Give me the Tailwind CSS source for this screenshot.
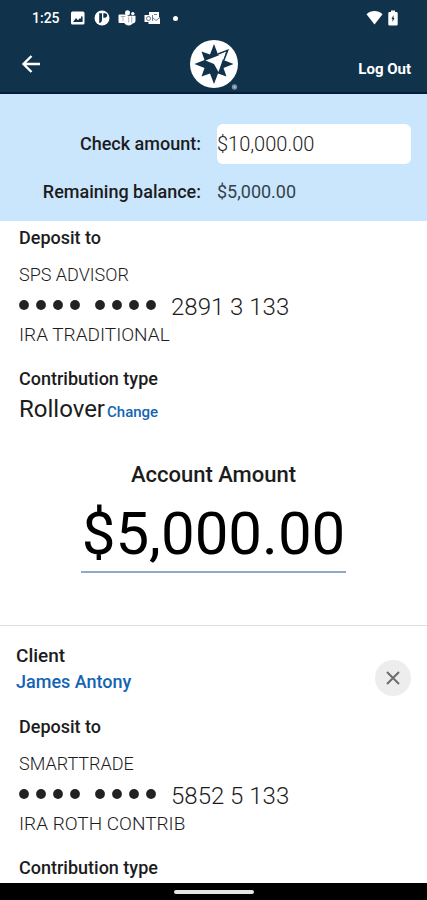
<!DOCTYPE html>
<html lang="en">
<head>
<meta charset="utf-8">
<meta name="viewport" content="width=device-width, initial-scale=1">
<title>Check deposit</title>
<script src="https://cdn.jsdelivr.net/npm/@tailwindcss/browser@4"></script>
</head>
<body class="flex min-h-screen flex-col bg-white font-['Roboto',sans-serif] text-[18px] leading-6 text-[#1c1c1c]">
<svg class="hidden" aria-hidden="true">
  <symbol id="mask" viewBox="0 0 138 10">
    <g fill="#222">
      <circle cx="5" cy="5" r="4.900"/><circle cx="22" cy="5" r="4.900"/><circle cx="39" cy="5" r="4.900"/><circle cx="56" cy="5" r="4.900"/>
      <circle cx="81" cy="5" r="4.900"/><circle cx="98" cy="5" r="4.900"/><circle cx="115" cy="5" r="4.900"/><circle cx="132" cy="5" r="4.900"/>
    </g>
  </symbol>
</svg>

<header class="border-b-2 border-[#051d3c] bg-[#10324b] text-white">
  <div class="flex h-9 items-center justify-between pr-7 pl-8">
    <div class="flex items-center gap-2">
      <span class="w-[30px] text-[14px] font-medium">1:25</span>
      <svg class="size-4" viewBox="0 0 16 16" aria-hidden="true">
        <rect x="1" y="1.500" width="13.500" height="13" rx="1.500" fill="#fff"/>
        <path d="M3 12l3-4 2 2.300 2-2.300 1 1V6.500h1.600V12z" fill="#10324b"/>
      </svg>
      <svg class="size-4" viewBox="0 0 16 16" aria-hidden="true">
        <circle cx="8" cy="8" r="7.500" fill="#fff"/>
        <path d="M5.200 13V3.300H8v6.500C8 11.800 7 13 5.200 13zM9.300 3.300h1.600c1.500 0 2.300 1 2.300 2.200s-.900 2.200-2.300 2.200H9.300z" fill="#10324b"/>
      </svg>
      <svg class="h-4 w-[18px]" viewBox="0 0 18 16" aria-hidden="true">
        <circle cx="9.500" cy="2.800" r="2.500" fill="#fff"/><circle cx="14.800" cy="3.600" r="1.700" fill="#fff"/>
        <path d="M6 5.800h11.500v4.700c0 2-1.300 3-3 3-.800 1.300-2 2-3.700 2-2.500 0-4.300-1.500-4.800-3.500z" fill="#fff"/>
        <rect x=".500" y="4.500" width="9" height="8.500" rx="1" fill="#fff"/>
        <path d="M2.700 6.500h4.600M5 6.500v4.700M10.700 6.500v6M13.700 6.500v6" fill="none" stroke="#a3b0bb" stroke-width="1"/>
      </svg>
      <svg class="h-4 w-[17px]" viewBox="0 0 17 16" aria-hidden="true">
        <path d="M5 2h10v5l1 1v6H4.500v-2H.500V5H5z" fill="#fff"/>
        <circle cx="4.500" cy="8.500" r="2" fill="none" stroke="#5d7486"/>
        <path d="M8.500 5v6M8.500 7.500l3.500 3 4-3M10 4.500h3" fill="none" stroke="#5d7486" stroke-width=".900"/>
      </svg>
      <span class="ml-1 size-[5px] rounded-full bg-white"></span>
    </div>
    <div class="flex items-center gap-1">
      <svg class="h-4 w-[17px]" viewBox="0 0 17 16" aria-hidden="true"><path d="M.500 4.300C5-.100 12-.100 16.500 4.300L8.500 14.500z" fill="#fff"/></svg>
      <svg class="h-4 w-3" viewBox="0 0 12 16" aria-hidden="true">
        <path d="M4 .500h4V2h1.500q1.200 0 1.200 1.200v11q0 1.300-1.200 1.300h-7q-1.200 0-1.200-1.300v-11Q1.300 2 2.500 2H4z" fill="#fff"/>
        <path d="M6.500 5L4.500 9h1v3L7.500 8h-1z" fill="#10324b"/>
      </svg>
    </div>
  </div>
  <div class="grid h-14 grid-cols-[1fr_auto_1fr] items-center px-4">
    <button type="button" aria-label="Back" class="flex h-10 w-10 items-center pl-1">
      <svg class="h-5 w-5" viewBox="0 0 20 20" fill="none" stroke="#fff" stroke-width="2.400" aria-hidden="true"><path d="M20 10H3.500M11.500 2L3.500 10l8 8"/></svg>
    </button>
    <svg class="size-12 overflow-visible" viewBox="0 0 48 48" role="img" aria-label="Company logo">
      <circle cx="24" cy="24" r="24" fill="#fff"/>
      <path d="M24 4L28 14.500 37.500 10.500 33.500 20 43.500 24 33.500 28 36.500 36.500 28 33.500 24 44 20 33.500 11.500 36.500 14.500 28 4.500 24 14.500 20 11.500 11.500 20 14.500z" fill="#10324b"/>
      <path d="M35 13L15.500 20.500 24 24 28.500 32z" fill="#fff"/>
      <path d="M28.500 14.700L35 12.500 33 19" fill="none" stroke="#fff" stroke-width="1.500"/>
      <path d="M28 14L37.800 10.200 34 20" fill="none" stroke="#10324b" stroke-width="1.400"/>
      <circle cx="44.500" cy="47" r="2.700" fill="#7c92a3"/><circle cx="44.500" cy="47" r="1" fill="#b2bfca"/>
    </svg>
    <button type="button" class="justify-self-end pt-[10px] text-[15px] font-bold">Log Out</button>
  </div>
</header>

<main class="flex-1">
  <section class="grid grid-cols-[201px_1fr] items-center gap-4 bg-[#cae6fc] pt-[30px] pr-4 pb-[17px]">
    <label for="check" class="text-right font-medium">Check amount:</label>
    <input id="check" type="text" value="$10,000.00" class="h-10 w-full min-w-0 rounded-md bg-white text-[20px] font-light">
    <span class="text-right font-medium">Remaining balance:</span>
    <span class="text-[#33424e]">$5,000.00</span>
  </section>

  <section class="border-b border-[#dedede] pb-[52px]">
    <div class="px-[19px] pt-[5px]">
      <h2 class="font-medium">Deposit to</h2>
      <p class="mt-[13px] font-light">SPS ADVISOR</p>
      <div class="flex h-9 items-center gap-[14px]">
        <svg class="h-[10px] w-[138px]" role="img" aria-label="Masked digits"><use href="#mask"/></svg>
        <span class="pt-1 text-[24px] font-light">2891 3 133</span>
      </div>
      <p class="text-[19px] font-light">IRA TRADITIONAL</p>
      <h2 class="mt-5 font-medium">Contribution type</h2>
      <div class="flex h-9 items-baseline gap-[2px] pt-[6px]">
        <span class="text-[24px]">Rollover</span>
        <a href="#" class="text-[15px] font-medium text-[#1464b4]">Change</a>
      </div>
    </div>
    <div class="mt-8 flex flex-col items-center">
      <label for="amount" class="text-[22px] leading-8 font-medium">Account Amount</label>
      <input id="amount" type="text" value="$5,000.00" class="h-[82px] w-[265px] border-b-2 border-[#8fa9c8] pt-1 text-center text-[60px] text-black">
    </div>
  </section>

  <section class="pt-[14px]">
    <div class="flex items-center justify-between px-4">
      <div>
        <h2 class="text-[19px] leading-7 font-medium">Client</h2>
        <a href="#" class="block font-medium text-[#1464b4]">James Antony</a>
      </div>
      <button type="button" aria-label="Remove client" class="mt-5 flex size-9 items-center justify-center rounded-full bg-[#ededed]">
        <svg class="size-[14px]" viewBox="0 0 14 14" fill="none" stroke="#6d6d6d" stroke-width="2" aria-hidden="true"><path d="M1 1l12 12M13 1L1 13"/></svg>
      </button>
    </div>
    <div class="px-[19px] pt-[19px]">
      <h2 class="font-medium">Deposit to</h2>
      <p class="mt-[13px] font-light">SMARTTRADE</p>
      <div class="flex h-9 items-center gap-[14px]">
        <svg class="h-[10px] w-[138px]" role="img" aria-label="Masked digits"><use href="#mask"/></svg>
        <span class="pt-1 text-[24px] font-light">5852 5 133</span>
      </div>
      <p class="text-[19px] font-light">IRA ROTH CONTRIB</p>
      <h2 class="mt-5 font-medium">Contribution type</h2>
    </div>
  </section>
</main>

<footer class="flex h-[17px] items-center justify-center bg-black">
  <span class="h-1 w-20 rounded-full bg-[#e6e6e6]"></span>
</footer>
</body>
</html>
